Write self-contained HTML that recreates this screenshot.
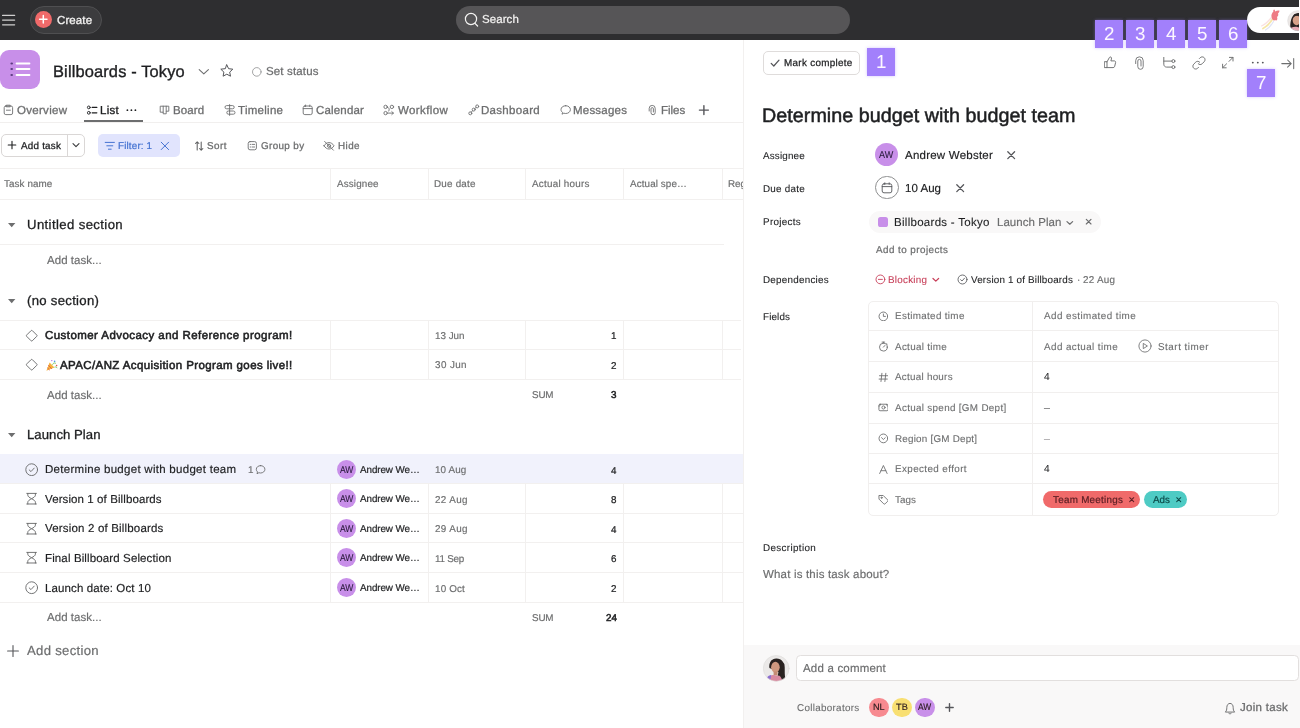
<!DOCTYPE html>
<html lang="en"><head><meta charset="utf-8"><title>Billboards - Tokyo</title>
<style>
html,body{margin:0;padding:0;background:#fff}
body{width:1300px;height:728px;overflow:hidden;position:relative;font-family:"Liberation Sans",sans-serif;-webkit-font-smoothing:antialiased}
#app{will-change:transform;position:absolute;left:0;top:0;width:1300px;height:728px;overflow:hidden;background:#fff}
.b{position:absolute;display:block}
.t{position:absolute;white-space:nowrap;line-height:1;display:block;transform:matrix(1,0,0.001,1,0,0)}
</style></head><body><div id="app">
<div class="b" style="left:0px;top:0px;width:1300px;height:39.75px;background:#2e2e30;"></div>
<svg class="b" style="left:1px;top:12px;" width="16" height="16" viewBox="0 0 16 16" fill="none" stroke="#d0cfce" stroke-width="1.3" stroke-linecap="round" stroke-linejoin="round"><path d="M1.6 3.4H13.6M1.6 8.1H13.6M1.6 12.8H13.6"/></svg>
<div class="b" style="left:30px;top:6px;width:72px;height:27.5px;background:#3c3c3e;border-radius:14px;border:1px solid #4f4f51;box-sizing:border-box;"></div>
<div class="b" style="left:35.2px;top:11.2px;width:16.6px;height:16.6px;background:#f06a6a;border-radius:9px;"></div>
<svg class="b" style="left:35.2px;top:11.2px;" width="16.6" height="16.6" viewBox="0 0 16.6 16.6" fill="none" stroke="#fff" stroke-width="1.5" stroke-linecap="round" stroke-linejoin="round"><path d="M8.3 4.6V12M4.6 8.3H12"/></svg>
<span class="t " style="left:56.9px;top:14.65px;font-size:11.52px;color:#f5f4f3;letter-spacing:0.1px;-webkit-text-stroke:0.3px #f5f4f3;">Create</span>
<div class="b" style="left:455.5px;top:6px;width:394.5px;height:27.5px;background:#565557;border-radius:14px;"></div>
<svg class="b" style="left:463px;top:11px;" width="18" height="18" viewBox="0 0 18 18" fill="none" stroke="#f5f4f3" stroke-width="1.2" stroke-linecap="round" stroke-linejoin="round"><circle cx="8" cy="8" r="5.6"/><path d="M12 12.3L14.6 15"/></svg>
<span class="t " style="left:482.3px;top:14.05px;font-size:11.52px;color:#f5f4f3;letter-spacing:0.06px;-webkit-text-stroke:0.2px #f5f4f3;">Search</span>
<div class="b" style="left:1246.7px;top:6.6px;width:70px;height:26.2px;background:#fff;border-radius:13.1px;"></div>
<svg class="b" style="left:1258px;top:8px;" width="26" height="24" viewBox="0 0 26 24" fill="none" stroke="none" stroke-width="1" stroke-linecap="round" stroke-linejoin="round"><path d="M5 20.5C9 18.5 12 15 14.5 11" stroke="#f6e6a8" stroke-width="1.8"/>
<path d="M7.5 22C11 20 13.5 17 15.5 13.5" stroke="#dfe4f6" stroke-width="1.2"/>
<path d="M3.5 18C7.5 16.5 10 13.5 13 10" stroke="#fae0e0" stroke-width="1.2"/>
<path d="M13.6 9.6C13 7.4 13.8 5 15.4 3.6C15 2.6 15.4 1.6 16.2 1.6C16.8 1.8 17 2.6 17.2 3.4C18.4 2.6 20 2.2 21.4 2.6C21.6 3.6 21 4.8 20 5.6C20.6 6.8 20.2 8.4 19 9C19.6 10.4 19.4 11.8 18.4 12.6C17.4 11.8 16.6 12.8 15.6 12.4C14.6 12 14 10.8 13.6 9.6Z" fill="#ee7b84" stroke="none"/></svg>
<svg class="b" style="left:1286.6px;top:9.6px;" width="22" height="22" viewBox="0 0 22 22" fill="none" stroke="none" stroke-width="1" stroke-linecap="round" stroke-linejoin="round"><defs><clipPath id="c1"><circle cx="10.7" cy="10.7" r="10"/></clipPath></defs>
<g clip-path="url(#c1)" stroke="none"><rect width="22" height="22" fill="#ece8e6"/>
<path d="M3.5 22C2.5 13 4 3.5 11 3C18 2.8 19.5 9 19 15C18.8 18 19 20 19.5 22Z" fill="#2b2422"/>
<ellipse cx="9.6" cy="10.4" rx="3.9" ry="4.8" fill="#d7a189"/>
<path d="M5.8 8.4C7 5.4 11 4.6 14 7.4C14.6 10 15 13 14 18L17 20L18 8L12.5 3.5L7 4.6Z" fill="#2b2422"/>
<path d="M1 22C2 18.5 5 16.6 9.4 16.8C12 17 14 18.5 15 22Z" fill="#e7a9b4"/></g>
<circle cx="10.7" cy="10.7" r="10" stroke="#dcd9d8" stroke-width="0.6" fill="none"/></svg>
<div class="b" style="left:-0.5px;top:49.8px;width:40px;height:39.6px;background:#c88fe9;border-radius:9px;"></div>
<svg class="b" style="left:7.5px;top:58px;" width="24" height="22" viewBox="0 0 24 22" fill="none" stroke="none" stroke-width="1" stroke-linecap="round" stroke-linejoin="round"><path d="M8.6 5.4H21.4M8.6 11.1H21.4M8.6 16.9H21.4" stroke="#fff" stroke-width="2"/><ellipse cx="3.7" cy="5.4" rx="1.3" ry="1" fill="#5b3c80" stroke="none"/><ellipse cx="3.7" cy="11.1" rx="1.3" ry="1" fill="#5b3c80" stroke="none"/><ellipse cx="3.7" cy="16.9" rx="1.3" ry="1" fill="#5b3c80" stroke="none"/></svg>
<span class="t " style="left:53.2px;top:63.47px;font-size:16.46px;color:#1e1f21;letter-spacing:0.13px;-webkit-text-stroke:0.35px #1e1f21;">Billboards - Tokyo</span>
<svg class="b" style="left:197px;top:66px;" width="14" height="12" viewBox="0 0 14 12" fill="none" stroke="#6d6e6f" stroke-width="1.1" stroke-linecap="round" stroke-linejoin="round"><path d="M2.2 3.6L6.8 7.8L11.4 3.6"/></svg>
<svg class="b" style="left:219px;top:63px;" width="16" height="16" viewBox="0 0 16 16" fill="none" stroke="#55565a" stroke-width="1" stroke-linecap="round" stroke-linejoin="round"><path d="M7.8 1.9L9.6 5.7L13.8 6.2L10.7 9.1L11.5 13.2L7.8 11.2L4.1 13.2L4.9 9.1L1.8 6.2L6 5.7Z"/></svg>
<svg class="b" style="left:251px;top:65.5px;" width="12" height="12" viewBox="0 0 12 12" fill="none" stroke="#8d8e8f" stroke-width="0.8" stroke-linecap="round" stroke-linejoin="round"><circle cx="5.8" cy="5.9" r="4.3"/></svg>
<span class="t " style="left:266.2px;top:65.65px;font-size:11.52px;color:#6d6e6f;letter-spacing:0.14px;-webkit-text-stroke:0.25px #6d6e6f;">Set status</span>
<svg class="b" style="left:3.2px;top:104px;" width="12" height="12" viewBox="0 0 12 12" fill="none" stroke="#6d6e6f" stroke-width="0.9" stroke-linecap="round" stroke-linejoin="round"><rect x="1.2" y="2" width="8.4" height="8.6" rx="1.6"/><path d="M3.6 1.2H7.2V2.8H3.6Z"/><path d="M3.4 6.2H7.4"/></svg>
<span class="t " style="left:16.6px;top:104.85px;font-size:11.52px;color:#6d6e6f;letter-spacing:0.29px;-webkit-text-stroke:0.3px #6d6e6f;">Overview</span>
<svg class="b" style="left:86px;top:104px;" width="12" height="12" viewBox="0 0 12 12" fill="none" stroke="#1e1f21" stroke-width="0.9" stroke-linecap="round" stroke-linejoin="round"><circle cx="2.8" cy="3.4" r="1.4"/><circle cx="2.8" cy="8.8" r="1.4"/><path d="M6.2 3.4H10.8M6.2 8.8H10.8" stroke-width="1.3"/></svg>
<span class="t " style="left:100.2px;top:104.85px;font-size:11.52px;color:#1e1f21;letter-spacing:0.26px;-webkit-text-stroke:0.35px #1e1f21;">List</span>
<svg class="b" style="left:125px;top:104px;" width="14" height="12" viewBox="0 0 14 12" fill="#1e1f21" stroke="none" stroke-width="1" stroke-linecap="round" stroke-linejoin="round"><circle cx="2.4" cy="6.2" r="0.9"/><circle cx="6.4" cy="6.2" r="0.9"/><circle cx="10.4" cy="6.2" r="0.9"/></svg>
<svg class="b" style="left:158.5px;top:104px;" width="12" height="12" viewBox="0 0 12 12" fill="none" stroke="#6d6e6f" stroke-width="0.9" stroke-linecap="round" stroke-linejoin="round"><path d="M1.6 2.2H9.8V7.2H7.2V9.8H4.2V8.2H1.6Z"/><path d="M4.2 2.2V8.2M7.2 2.2V7.2"/></svg>
<span class="t " style="left:172.7px;top:104.85px;font-size:11.52px;color:#6d6e6f;letter-spacing:0.12px;-webkit-text-stroke:0.3px #6d6e6f;">Board</span>
<svg class="b" style="left:223.6px;top:104px;" width="12" height="12" viewBox="0 0 12 12" fill="none" stroke="#6d6e6f" stroke-width="0.9" stroke-linecap="round" stroke-linejoin="round"><path d="M5.6 1.6H2.6A1.5 1.5 0 0 0 2.6 4.8H8.6A1.5 1.5 0 0 0 8.6 1.6H5.6M5.6 7H4.4A1.5 1.5 0 0 0 4.4 10.2H9.4A1.5 1.5 0 0 0 9.4 7H5.6M5.6 0.6V11.4"/></svg>
<span class="t " style="left:237.7px;top:104.85px;font-size:11.52px;color:#6d6e6f;letter-spacing:0.27px;-webkit-text-stroke:0.3px #6d6e6f;">Timeline</span>
<svg class="b" style="left:302.2px;top:104px;" width="12" height="12" viewBox="0 0 12 12" fill="none" stroke="#6d6e6f" stroke-width="0.9" stroke-linecap="round" stroke-linejoin="round"><rect x="1.2" y="2" width="9" height="8.6" rx="1.6"/><path d="M1.2 4.6H10.2M3.6 1V2.6M7.8 1V2.6"/></svg>
<span class="t " style="left:316.3px;top:104.85px;font-size:11.52px;color:#6d6e6f;letter-spacing:0.17px;-webkit-text-stroke:0.3px #6d6e6f;">Calendar</span>
<svg class="b" style="left:383.4px;top:104px;" width="12" height="12" viewBox="0 0 12 12" fill="none" stroke="#6d6e6f" stroke-width="0.9" stroke-linecap="round" stroke-linejoin="round"><circle cx="2.6" cy="2.9" r="1.7"/><circle cx="8.9" cy="2.9" r="1.7"/><circle cx="2.6" cy="9.1" r="1.7"/><path d="M4.3 3.2C6.2 3.6 6.8 5.4 5.8 7M5.2 9.1H10.4M8.8 7.6L10.4 9.1L8.8 10.6"/></svg>
<span class="t " style="left:397.9px;top:104.85px;font-size:11.52px;color:#6d6e6f;letter-spacing:0.38px;-webkit-text-stroke:0.3px #6d6e6f;">Workflow</span>
<svg class="b" style="left:467.6px;top:104px;" width="12" height="12" viewBox="0 0 12 12" fill="none" stroke="#6d6e6f" stroke-width="0.9" stroke-linecap="round" stroke-linejoin="round"><circle cx="2.3" cy="9.3" r="1.5"/><circle cx="5.7" cy="5.6" r="1.5"/><circle cx="9.2" cy="2.4" r="1.5"/><path d="M3.2 8.2L4.6 6.7M6.8 4.6L8 3.5"/></svg>
<span class="t " style="left:481.3px;top:104.85px;font-size:11.52px;color:#6d6e6f;letter-spacing:0.29px;-webkit-text-stroke:0.3px #6d6e6f;">Dashboard</span>
<svg class="b" style="left:559.6px;top:104px;" width="12" height="12" viewBox="0 0 12 12" fill="none" stroke="#6d6e6f" stroke-width="0.9" stroke-linecap="round" stroke-linejoin="round"><path d="M5.7 1.7C8.4 1.7 10.4 3.4 10.4 5.6C10.4 7.8 8.4 9.5 5.7 9.5C5 9.5 4.4 9.4 3.8 9.2L2 10.2L2.6 8.5C1.6 7.8 1 6.8 1 5.6C1 3.4 3 1.7 5.7 1.7Z"/></svg>
<span class="t " style="left:573.4px;top:104.85px;font-size:11.52px;color:#6d6e6f;letter-spacing:0.2px;-webkit-text-stroke:0.3px #6d6e6f;">Messages</span>
<svg class="b" style="left:648.2px;top:104px;" width="12" height="12" viewBox="0 0 12 12" fill="none" stroke="#6d6e6f" stroke-width="0.9" stroke-linecap="round" stroke-linejoin="round"><path d="M1.2 7V4.4A3 3 0 0 1 7.2 4.4V8.6A2.1 2.1 0 0 1 3 8.6V4.8A1.2 1.2 0 0 1 5.4 4.8V8"/></svg>
<span class="t " style="left:660.8px;top:104.85px;font-size:11.52px;color:#6d6e6f;letter-spacing:-0.01px;-webkit-text-stroke:0.3px #6d6e6f;">Files</span>
<svg class="b" style="left:697px;top:104px;" width="14" height="12" viewBox="0 0 14 12" fill="none" stroke="#55565a" stroke-width="1.4" stroke-linecap="round" stroke-linejoin="round"><path d="M6.9 1.6V10.6M2.4 6.1H11.4"/></svg>
<div class="b" style="left:84.2px;top:120px;width:58.6px;height:1.6px;background:#6d6e6f;"></div>
<div class="b" style="left:0px;top:122.2px;width:744px;height:1px;background:#f1efee;"></div>
<div class="b" style="left:0.8px;top:134.3px;width:83.8px;height:22.4px;background:#fff;border-radius:5px;border:1px solid #dad7d6;box-sizing:border-box;"></div>
<div class="b" style="left:67.2px;top:135px;width:1px;height:21px;background:#dad7d6;"></div>
<svg class="b" style="left:6px;top:139px;" width="12" height="12" viewBox="0 0 12 12" fill="none" stroke="#1e1f21" stroke-width="1.1" stroke-linecap="round" stroke-linejoin="round"><path d="M6 2.2V9.8M2.2 6H9.8"/></svg>
<span class="t " style="left:20.8px;top:140.75px;font-size:9.87px;color:#1e1f21;letter-spacing:0.21px;-webkit-text-stroke:0.28px #1e1f21;">Add task</span>
<svg class="b" style="left:71px;top:140px;" width="10" height="10" viewBox="0 0 10 10" fill="none" stroke="#3a3b3d" stroke-width="1.1" stroke-linecap="round" stroke-linejoin="round"><path d="M2 3.6L5 6.6L8 3.6"/></svg>
<div class="b" style="left:98.2px;top:134.1px;width:81.8px;height:22.6px;background:#e1e4fd;border-radius:5px;"></div>
<svg class="b" style="left:104px;top:139.5px;" width="12" height="12" viewBox="0 0 12 12" fill="none" stroke="#4573d2" stroke-width="1" stroke-linecap="round" stroke-linejoin="round"><path d="M1.2 2.4H10.4M2.8 5.8H8.8M4.4 9.2H7.2"/></svg>
<span class="t " style="left:118.3px;top:140.75px;font-size:9.87px;color:#4573d2;letter-spacing:0.15px;-webkit-text-stroke:0.22px #4573d2;">Filter: 1</span>
<svg class="b" style="left:159px;top:139.5px;" width="12" height="12" viewBox="0 0 12 12" fill="none" stroke="#4573d2" stroke-width="1" stroke-linecap="round" stroke-linejoin="round"><path d="M2.2 2.2L9.6 9.6M9.6 2.2L2.2 9.6"/></svg>
<svg class="b" style="left:193.5px;top:139.5px;" width="12" height="12" viewBox="0 0 12 12" fill="none" stroke="#5f6061" stroke-width="1.05" stroke-linecap="round" stroke-linejoin="round"><path d="M3.2 10V1.8M1.5 3.5L3.2 1.8L4.9 3.5M7.2 2V10.2M5.5 8.5L7.2 10.2L8.9 8.5"/></svg>
<span class="t " style="left:206.9px;top:140.75px;font-size:9.87px;color:#6d6e6f;letter-spacing:0.43px;-webkit-text-stroke:0.28px #6d6e6f;">Sort</span>
<svg class="b" style="left:247.4px;top:139.5px;" width="12" height="12" viewBox="0 0 12 12" fill="none" stroke="#6d6e6f" stroke-width="0.9" stroke-linecap="round" stroke-linejoin="round"><rect x="1.2" y="1.6" width="8.2" height="8.2" rx="1.8"/><path d="M3.2 4.4H3.6M5 4.4H7.6M3.2 7H3.6M5 7H7.6"/></svg>
<span class="t " style="left:260.5px;top:140.75px;font-size:9.87px;color:#6d6e6f;letter-spacing:0.36px;-webkit-text-stroke:0.28px #6d6e6f;">Group by</span>
<svg class="b" style="left:323.4px;top:139.5px;" width="12" height="12" viewBox="0 0 12 12" fill="none" stroke="#6d6e6f" stroke-width="0.9" stroke-linecap="round" stroke-linejoin="round"><path d="M1 5.8C2.4 3.6 4 2.6 6 2.6C8 2.6 9.6 3.6 11 5.8C9.6 8 8 9 6 9C4 9 2.4 8 1 5.8Z"/><circle cx="6" cy="5.8" r="1.6"/><path d="M1.6 1.4L10.4 10.2"/></svg>
<span class="t " style="left:337.8px;top:140.75px;font-size:9.87px;color:#6d6e6f;letter-spacing:0.43px;-webkit-text-stroke:0.28px #6d6e6f;">Hide</span>
<div class="b" style="left:0px;top:168px;width:744px;height:1px;background:#f2f0ef;"></div>
<div class="b" style="left:0px;top:199px;width:744px;height:1px;background:#f2f0ef;"></div>
<div class="b" style="left:330px;top:168px;width:1px;height:32px;background:#f2f0ef;"></div>
<div class="b" style="left:428px;top:168px;width:1px;height:32px;background:#f2f0ef;"></div>
<div class="b" style="left:525px;top:168px;width:1px;height:32px;background:#f2f0ef;"></div>
<div class="b" style="left:623px;top:168px;width:1px;height:32px;background:#f2f0ef;"></div>
<div class="b" style="left:722px;top:168px;width:1px;height:32px;background:#f2f0ef;"></div>
<span class="t " style="left:3.8px;top:178.75px;font-size:9.87px;color:#6d6e6f;letter-spacing:0.08px;-webkit-text-stroke:0.17px #6d6e6f;">Task name</span>
<span class="t " style="left:336.8px;top:178.75px;font-size:9.87px;color:#6d6e6f;letter-spacing:0.13px;-webkit-text-stroke:0.17px #6d6e6f;">Assignee</span>
<span class="t " style="left:434.4px;top:178.75px;font-size:9.87px;color:#6d6e6f;letter-spacing:0.2px;-webkit-text-stroke:0.17px #6d6e6f;">Due date</span>
<span class="t " style="left:532.4px;top:178.75px;font-size:9.87px;color:#6d6e6f;letter-spacing:0.24px;-webkit-text-stroke:0.17px #6d6e6f;">Actual hours</span>
<span class="t " style="left:630.1px;top:178.95px;font-size:9.87px;color:#6d6e6f;letter-spacing:0.1px;-webkit-text-stroke:0.17px #6d6e6f;">Actual spe…</span>
<span class="t " style="left:727.7px;top:178.75px;font-size:9.87px;color:#6d6e6f;-webkit-text-stroke:0.17px #6d6e6f;">Region</span>
<svg class="b" style="left:7px;top:221.3px;" width="10" height="8" viewBox="0 0 10 8" fill="#6d6e6f" stroke="none" stroke-width="1" stroke-linecap="round" stroke-linejoin="round"><path d="M1 2H8.4L4.7 6.2Z"/></svg>
<span class="t " style="left:26.6px;top:218.36px;font-size:13.16px;color:#1e1f21;letter-spacing:0.38px;-webkit-text-stroke:0.3px #1e1f21;">Untitled section</span>
<div class="b" style="left:0px;top:244px;width:724px;height:1px;background:#f2f0ef;"></div>
<span class="t " style="left:46.7px;top:255.15px;font-size:11.52px;color:#6d6e6f;letter-spacing:0.02px;-webkit-text-stroke:0.17px #6d6e6f;">Add task...</span>
<svg class="b" style="left:7px;top:296.7px;" width="10" height="8" viewBox="0 0 10 8" fill="#6d6e6f" stroke="none" stroke-width="1" stroke-linecap="round" stroke-linejoin="round"><path d="M1 2H8.4L4.7 6.2Z"/></svg>
<span class="t " style="left:26.6px;top:293.76px;font-size:13.16px;color:#1e1f21;letter-spacing:0.29px;-webkit-text-stroke:0.3px #1e1f21;">(no section)</span>
<div class="b" style="left:0px;top:320px;width:741px;height:1px;background:#f2f0ef;"></div>
<div class="b" style="left:0px;top:349px;width:741px;height:1px;background:#f2f0ef;"></div>
<div class="b" style="left:0px;top:379px;width:741px;height:1px;background:#f2f0ef;"></div>
<div class="b" style="left:330px;top:321px;width:1px;height:58px;background:#f2f0ef;"></div>
<div class="b" style="left:428px;top:321px;width:1px;height:58px;background:#f2f0ef;"></div>
<div class="b" style="left:525px;top:321px;width:1px;height:58px;background:#f2f0ef;"></div>
<div class="b" style="left:623px;top:321px;width:1px;height:58px;background:#f2f0ef;"></div>
<div class="b" style="left:722px;top:321px;width:1px;height:58px;background:#f2f0ef;"></div>
<svg class="b" style="left:24.9px;top:328.8px;" width="13.4" height="13.4" viewBox="0 0 13.4 13.4" fill="none" stroke="#6d6e6f" stroke-width="0.95" stroke-linecap="round" stroke-linejoin="round"><path d="M6.1 1.6Q6.7 1 7.3 1.6L11.8 6.1Q12.4 6.7 11.8 7.3L7.3 11.8Q6.7 12.4 6.1 11.8L1.6 7.3Q1 6.7 1.6 6.1Z"/></svg>
<span class="t " style="left:45.1px;top:329.95px;font-size:11.52px;color:#1e1f21;letter-spacing:0.43px;-webkit-text-stroke:0.55px #1e1f21;">Customer Advocacy and Reference program!</span>
<span class="t " style="left:434.5px;top:330.95px;font-size:9.87px;color:#6d6e6f;letter-spacing:-0.01px;-webkit-text-stroke:0.17px #6d6e6f;">13 Jun</span>
<span class="t " style="left:610.62px;top:331.35px;font-size:9.87px;color:#1e1f21;-webkit-text-stroke:0.23px #1e1f21;">1</span>
<svg class="b" style="left:24.9px;top:358.4px;" width="13.4" height="13.4" viewBox="0 0 13.4 13.4" fill="none" stroke="#6d6e6f" stroke-width="0.95" stroke-linecap="round" stroke-linejoin="round"><path d="M6.1 1.6Q6.7 1 7.3 1.6L11.8 6.1Q12.4 6.7 11.8 7.3L7.3 11.8Q6.7 12.4 6.1 11.8L1.6 7.3Q1 6.7 1.6 6.1Z"/></svg>
<span class="t" style="left:44.5px;top:359px;font-size:11.5px;opacity:0">🎉</span>
<svg class="b" style="left:44.6px;top:358.6px;" width="13" height="13" viewBox="0 0 13 13" fill="none" stroke="none" stroke-width="1" stroke-linecap="round" stroke-linejoin="round"><path d="M1.4 11.8L4.6 3.6L9.4 8.6Z" fill="#f4b43c" stroke="none"/><path d="M2.6 9L4.4 10.8M3.6 6.4L6.6 9.6" stroke="#e0564a" stroke-width="0.9"/>
<circle cx="9.6" cy="2.4" r="0.8" fill="#4f9de8" stroke="none"/><circle cx="11.6" cy="6.6" r="0.8" fill="#e0564a" stroke="none"/><circle cx="6.8" cy="1.6" r="0.7" fill="#b36fe0" stroke="none"/>
<path d="M7.6 5.4C8 4 9.4 3.6 10.6 4.2M9.8 8C10.6 7.6 11.6 8 12 8.8" stroke="#6cc04a" stroke-width="0.8" fill="none"/></svg>
<span class="t " style="left:60px;top:359.85px;font-size:11.52px;color:#1e1f21;letter-spacing:0.38px;-webkit-text-stroke:0.55px #1e1f21;">APAC/ANZ Acquisition Program goes live!!</span>
<span class="t " style="left:434.5px;top:360.45px;font-size:9.87px;color:#6d6e6f;letter-spacing:0.39px;-webkit-text-stroke:0.17px #6d6e6f;">30 Jun</span>
<span class="t " style="left:610.62px;top:360.95px;font-size:9.87px;color:#1e1f21;-webkit-text-stroke:0.23px #1e1f21;">2</span>
<span class="t " style="left:46.7px;top:389.95px;font-size:11.52px;color:#6d6e6f;letter-spacing:0.02px;-webkit-text-stroke:0.17px #6d6e6f;">Add task...</span>
<span class="t " style="left:531.5px;top:389.65px;font-size:9.87px;color:#6d6e6f;letter-spacing:-0.17px;-webkit-text-stroke:0.17px #6d6e6f;">SUM</span>
<span class="t " style="left:611.02px;top:390.05px;font-size:9.87px;color:#1e1f21;-webkit-text-stroke:0.53px #1e1f21;">3</span>
<svg class="b" style="left:7px;top:430.7px;" width="10" height="8" viewBox="0 0 10 8" fill="#6d6e6f" stroke="none" stroke-width="1" stroke-linecap="round" stroke-linejoin="round"><path d="M1 2H8.4L4.7 6.2Z"/></svg>
<span class="t " style="left:26.6px;top:427.76px;font-size:13.16px;color:#1e1f21;letter-spacing:0.03px;-webkit-text-stroke:0.3px #1e1f21;">Launch Plan</span>
<div class="b" style="left:0px;top:454.2px;width:744px;height:29.6px;background:#f1f2fc;"></div>
<div class="b" style="left:0px;top:483px;width:744px;height:1px;background:#f2f0ef;"></div>
<div class="b" style="left:0px;top:513px;width:744px;height:1px;background:#f2f0ef;"></div>
<div class="b" style="left:0px;top:542px;width:744px;height:1px;background:#f2f0ef;"></div>
<div class="b" style="left:0px;top:572px;width:744px;height:1px;background:#f2f0ef;"></div>
<div class="b" style="left:0px;top:602px;width:744px;height:1px;background:#f2f0ef;"></div>
<div class="b" style="left:330px;top:484px;width:1px;height:118px;background:#f2f0ef;"></div>
<div class="b" style="left:428px;top:484px;width:1px;height:118px;background:#f2f0ef;"></div>
<div class="b" style="left:525px;top:484px;width:1px;height:118px;background:#f2f0ef;"></div>
<div class="b" style="left:623px;top:484px;width:1px;height:118px;background:#f2f0ef;"></div>
<div class="b" style="left:722px;top:484px;width:1px;height:118px;background:#f2f0ef;"></div>
<svg class="b" style="left:24.9px;top:462.8px;" width="13.4" height="13.4" viewBox="0 0 13.4 13.4" fill="none" stroke="#6d6e6f" stroke-width="0.95" stroke-linecap="round" stroke-linejoin="round"><circle cx="6.7" cy="6.7" r="5.9"/><path d="M4.2 6.9L6 8.6L9.2 5.1"/></svg>
<span class="t " style="left:45.1px;top:464.15px;font-size:11.52px;color:#1e1f21;letter-spacing:0.27px;-webkit-text-stroke:0.17px #1e1f21;">Determine budget with budget team</span>
<div class="b" style="left:337px;top:459.6px;width:19.2px;height:19.2px;background:#c88fe9;border-radius:10px;"></div>
<span class="t " style="left:340px;top:464.89px;font-size:9.7px;color:#2a1b3d;-webkit-text-stroke:0.1px #2a1b3d;transform:matrix(0.88,0,0.001,1,0,0);transform-origin:0px 50%;">AW</span>
<span class="t " style="left:360px;top:464.75px;font-size:9.87px;color:#1e1f21;letter-spacing:-0.09px;-webkit-text-stroke:0.2px #1e1f21;">Andrew We…</span>
<span class="t " style="left:434.5px;top:465.15px;font-size:9.87px;color:#6d6e6f;letter-spacing:0.13px;-webkit-text-stroke:0.17px #6d6e6f;">10 Aug</span>
<span class="t " style="left:610.62px;top:465.65px;font-size:9.87px;color:#1e1f21;-webkit-text-stroke:0.23px #1e1f21;">4</span>
<svg class="b" style="left:24.9px;top:492.35px;" width="13.4" height="13.4" viewBox="0 0 13.4 13.4" fill="none" stroke="#6d6e6f" stroke-width="0.95" stroke-linecap="round" stroke-linejoin="round"><path d="M1.8 1.4H11.4M1.8 12H11.4M2.8 1.4V3.2C2.8 4.6 4.6 5.6 6.6 6.7C8.6 5.6 10.4 4.6 10.4 3.2V1.4M2.8 12V10.2C2.8 8.8 4.6 7.8 6.6 6.7C8.6 7.8 10.4 8.8 10.4 10.2V12"/></svg>
<span class="t " style="left:45.1px;top:493.7px;font-size:11.52px;color:#1e1f21;letter-spacing:0.09px;-webkit-text-stroke:0.17px #1e1f21;">Version 1 of Billboards</span>
<div class="b" style="left:337px;top:489.15px;width:19.2px;height:19.2px;background:#c88fe9;border-radius:10px;"></div>
<span class="t " style="left:340px;top:494.44px;font-size:9.7px;color:#2a1b3d;-webkit-text-stroke:0.1px #2a1b3d;transform:matrix(0.88,0,0.001,1,0,0);transform-origin:0px 50%;">AW</span>
<span class="t " style="left:360px;top:494.3px;font-size:9.87px;color:#1e1f21;letter-spacing:-0.09px;-webkit-text-stroke:0.2px #1e1f21;">Andrew We…</span>
<span class="t " style="left:434.5px;top:494.7px;font-size:9.87px;color:#6d6e6f;letter-spacing:0.37px;-webkit-text-stroke:0.17px #6d6e6f;">22 Aug</span>
<span class="t " style="left:610.62px;top:495.2px;font-size:9.87px;color:#1e1f21;-webkit-text-stroke:0.23px #1e1f21;">8</span>
<svg class="b" style="left:24.9px;top:521.75px;" width="13.4" height="13.4" viewBox="0 0 13.4 13.4" fill="none" stroke="#6d6e6f" stroke-width="0.95" stroke-linecap="round" stroke-linejoin="round"><path d="M1.8 1.4H11.4M1.8 12H11.4M2.8 1.4V3.2C2.8 4.6 4.6 5.6 6.6 6.7C8.6 5.6 10.4 4.6 10.4 3.2V1.4M2.8 12V10.2C2.8 8.8 4.6 7.8 6.6 6.7C8.6 7.8 10.4 8.8 10.4 10.2V12"/></svg>
<span class="t " style="left:45.1px;top:523.1px;font-size:11.52px;color:#1e1f21;letter-spacing:0.17px;-webkit-text-stroke:0.17px #1e1f21;">Version 2 of Billboards</span>
<div class="b" style="left:337px;top:518.55px;width:19.2px;height:19.2px;background:#c88fe9;border-radius:10px;"></div>
<span class="t " style="left:340px;top:523.84px;font-size:9.7px;color:#2a1b3d;-webkit-text-stroke:0.1px #2a1b3d;transform:matrix(0.88,0,0.001,1,0,0);transform-origin:0px 50%;">AW</span>
<span class="t " style="left:360px;top:523.7px;font-size:9.87px;color:#1e1f21;letter-spacing:-0.09px;-webkit-text-stroke:0.2px #1e1f21;">Andrew We…</span>
<span class="t " style="left:434.5px;top:524.1px;font-size:9.87px;color:#6d6e6f;letter-spacing:0.37px;-webkit-text-stroke:0.17px #6d6e6f;">29 Aug</span>
<span class="t " style="left:610.62px;top:524.6px;font-size:9.87px;color:#1e1f21;-webkit-text-stroke:0.23px #1e1f21;">4</span>
<svg class="b" style="left:24.9px;top:551.35px;" width="13.4" height="13.4" viewBox="0 0 13.4 13.4" fill="none" stroke="#6d6e6f" stroke-width="0.95" stroke-linecap="round" stroke-linejoin="round"><path d="M1.8 1.4H11.4M1.8 12H11.4M2.8 1.4V3.2C2.8 4.6 4.6 5.6 6.6 6.7C8.6 5.6 10.4 4.6 10.4 3.2V1.4M2.8 12V10.2C2.8 8.8 4.6 7.8 6.6 6.7C8.6 7.8 10.4 8.8 10.4 10.2V12"/></svg>
<span class="t " style="left:45.1px;top:552.7px;font-size:11.52px;color:#1e1f21;letter-spacing:0.12px;-webkit-text-stroke:0.17px #1e1f21;">Final Billboard Selection</span>
<div class="b" style="left:337px;top:548.15px;width:19.2px;height:19.2px;background:#c88fe9;border-radius:10px;"></div>
<span class="t " style="left:340px;top:553.44px;font-size:9.7px;color:#2a1b3d;-webkit-text-stroke:0.1px #2a1b3d;transform:matrix(0.88,0,0.001,1,0,0);transform-origin:0px 50%;">AW</span>
<span class="t " style="left:360px;top:553.3px;font-size:9.87px;color:#1e1f21;letter-spacing:-0.09px;-webkit-text-stroke:0.2px #1e1f21;">Andrew We…</span>
<span class="t " style="left:434.5px;top:553.7px;font-size:9.87px;color:#6d6e6f;letter-spacing:-0.27px;-webkit-text-stroke:0.17px #6d6e6f;">11 Sep</span>
<span class="t " style="left:610.62px;top:554.2px;font-size:9.87px;color:#1e1f21;-webkit-text-stroke:0.23px #1e1f21;">6</span>
<svg class="b" style="left:24.9px;top:581.25px;" width="13.4" height="13.4" viewBox="0 0 13.4 13.4" fill="none" stroke="#6d6e6f" stroke-width="0.95" stroke-linecap="round" stroke-linejoin="round"><circle cx="6.7" cy="6.7" r="5.9"/><path d="M4.2 6.9L6 8.6L9.2 5.1"/></svg>
<span class="t " style="left:45.1px;top:582.6px;font-size:11.52px;color:#1e1f21;letter-spacing:0.12px;-webkit-text-stroke:0.17px #1e1f21;">Launch date: Oct 10</span>
<div class="b" style="left:337px;top:578.05px;width:19.2px;height:19.2px;background:#c88fe9;border-radius:10px;"></div>
<span class="t " style="left:340px;top:583.34px;font-size:9.7px;color:#2a1b3d;-webkit-text-stroke:0.1px #2a1b3d;transform:matrix(0.88,0,0.001,1,0,0);transform-origin:0px 50%;">AW</span>
<span class="t " style="left:360px;top:583.2px;font-size:9.87px;color:#1e1f21;letter-spacing:-0.09px;-webkit-text-stroke:0.2px #1e1f21;">Andrew We…</span>
<span class="t " style="left:434.5px;top:583.6px;font-size:9.87px;color:#6d6e6f;letter-spacing:0.15px;-webkit-text-stroke:0.17px #6d6e6f;">10 Oct</span>
<span class="t " style="left:610.62px;top:584.1px;font-size:9.87px;color:#1e1f21;-webkit-text-stroke:0.23px #1e1f21;">2</span>
<span class="t " style="left:247.9px;top:465.05px;font-size:9.87px;color:#6d6e6f;-webkit-text-stroke:0.17px #6d6e6f;">1</span>
<svg class="b" style="left:255.4px;top:463.8px;" width="12" height="12" viewBox="0 0 12 12" fill="none" stroke="#6d6e6f" stroke-width="0.9" stroke-linecap="round" stroke-linejoin="round"><path d="M5.6 1.6C8 1.6 9.9 3.2 9.9 5.3C9.9 7.4 8 9 5.6 9C5 9 4.4 8.9 3.9 8.7L2 9.8L2.5 7.9C1.7 7.2 1.3 6.3 1.3 5.3C1.3 3.2 3.2 1.6 5.6 1.6Z"/></svg>
<span class="t " style="left:46.7px;top:612.35px;font-size:11.52px;color:#6d6e6f;letter-spacing:0.02px;-webkit-text-stroke:0.17px #6d6e6f;">Add task...</span>
<span class="t " style="left:531.5px;top:612.75px;font-size:9.87px;color:#6d6e6f;letter-spacing:-0.17px;-webkit-text-stroke:0.17px #6d6e6f;">SUM</span>
<span class="t " style="left:605.52px;top:613.05px;font-size:9.87px;color:#1e1f21;-webkit-text-stroke:0.53px #1e1f21;">24</span>
<svg class="b" style="left:6px;top:643.5px;" width="14" height="14" viewBox="0 0 14 14" fill="none" stroke="#55565a" stroke-width="1.1" stroke-linecap="round" stroke-linejoin="round"><path d="M7 1.6V12.4M1.6 7H12.4"/></svg>
<span class="t " style="left:26.7px;top:644.26px;font-size:13.16px;color:#6d6e6f;letter-spacing:0.28px;-webkit-text-stroke:0.2px #6d6e6f;">Add section</span>
<div class="b" style="left:744px;top:40px;width:556px;height:688px;background:#fff;"></div>
<div class="b" style="left:743px;top:40px;width:1px;height:688px;background:#f2f0ef;"></div>
<div class="b" style="left:763px;top:51.2px;width:96.6px;height:23.4px;background:#fff;border-radius:5px;border:1px solid #dfdcdb;box-sizing:border-box;"></div>
<svg class="b" style="left:769px;top:57px;" width="12" height="12" viewBox="0 0 12 12" fill="none" stroke="#55565a" stroke-width="1.25" stroke-linecap="round" stroke-linejoin="round"><path d="M2.2 6.4L4.8 9L10 3.2"/></svg>
<span class="t " style="left:783.7px;top:58.45px;font-size:9.87px;color:#1e1f21;letter-spacing:0.3px;-webkit-text-stroke:0.25px #1e1f21;">Mark complete</span>
<div class="b" style="left:867px;top:48px;width:28px;height:28px;background:#a280fb;box-shadow:0 0 3px rgba(160,130,250,.45);"></div>
<span class="t " style="left:875.78px;top:52.89px;font-size:18.8px;color:#fdf7ff;">1</span>
<div class="b" style="left:1095px;top:20px;width:28px;height:28px;background:#a280fb;box-shadow:0 0 3px rgba(160,130,250,.45);"></div>
<span class="t " style="left:1103.78px;top:24.89px;font-size:18.8px;color:#fdf7ff;">2</span>
<div class="b" style="left:1126px;top:20px;width:28px;height:28px;background:#a280fb;box-shadow:0 0 3px rgba(160,130,250,.45);"></div>
<span class="t " style="left:1134.78px;top:24.89px;font-size:18.8px;color:#fdf7ff;">3</span>
<div class="b" style="left:1157px;top:20px;width:28px;height:28px;background:#a280fb;box-shadow:0 0 3px rgba(160,130,250,.45);"></div>
<span class="t " style="left:1165.78px;top:24.89px;font-size:18.8px;color:#fdf7ff;">4</span>
<div class="b" style="left:1188px;top:20px;width:28px;height:28px;background:#a280fb;box-shadow:0 0 3px rgba(160,130,250,.45);"></div>
<span class="t " style="left:1196.78px;top:24.89px;font-size:18.8px;color:#fdf7ff;">5</span>
<div class="b" style="left:1219px;top:20px;width:28px;height:28px;background:#a280fb;box-shadow:0 0 3px rgba(160,130,250,.45);"></div>
<span class="t " style="left:1227.78px;top:24.89px;font-size:18.8px;color:#fdf7ff;">6</span>
<div class="b" style="left:1247px;top:69px;width:28px;height:28px;background:#a280fb;box-shadow:0 0 3px rgba(160,130,250,.45);"></div>
<span class="t " style="left:1255.78px;top:73.89px;font-size:18.8px;color:#fdf7ff;">7</span>
<svg class="b" style="left:1104px;top:55.6px;" width="13" height="13" viewBox="0 0 13 13" fill="none" stroke="#6d6e6f" stroke-width="0.95" stroke-linecap="round" stroke-linejoin="round"><path d="M0.7 5.7H3V11.6H0.7ZM3 5.9L5.3 1.7C5.6 1 6.5 0.7 7.1 1.2C7.6 1.7 7.6 2.4 7.4 3.1L6.9 4.9H10.3C11.2 4.9 11.8 5.7 11.6 6.5L10.7 10.3C10.5 11.1 9.9 11.6 9.1 11.6H3"/></svg>
<svg class="b" style="left:1135px;top:56.2px;" width="10" height="15" viewBox="0 0 10 15" fill="none" stroke="#6d6e6f" stroke-width="0.9" stroke-linecap="round" stroke-linejoin="round"><path d="M0.7 7.6V4.6A3.75 3.75 0 0 1 8.2 4.6V10.6A2.7 2.7 0 0 1 2.8 10.6V5A1.6 1.6 0 0 1 6 5V10"/></svg>
<svg class="b" style="left:1162.6px;top:57px;" width="13" height="13" viewBox="0 0 13 13" fill="none" stroke="#6d6e6f" stroke-width="0.95" stroke-linecap="round" stroke-linejoin="round"><path d="M0.8 0.4V7.2C0.8 8.9 2 10.1 3.6 10.1H8.8M0.8 4.1H8.8"/><circle cx="10.4" cy="4.1" r="1.5"/><circle cx="10.4" cy="10.1" r="1.5"/></svg>
<svg class="b" style="left:1191px;top:55.2px;" width="16" height="16" viewBox="0 0 16 16" fill="none" stroke="#6d6e6f" stroke-width="0.95" stroke-linecap="round" stroke-linejoin="round"><path d="M7.2 8.7C8.3 9.9 10 9.9 11.1 8.8L13.2 6.7C14.3 5.6 14.3 3.8 13.2 2.7C12.1 1.6 10.3 1.6 9.2 2.7L8.4 3.5M8.7 7.2C7.6 6 5.9 6 4.8 7.1L2.7 9.2C1.6 10.3 1.6 12.1 2.7 13.2C3.8 14.3 5.6 14.3 6.7 13.2L7.5 12.4"/></svg>
<svg class="b" style="left:1220px;top:55.4px;" width="16" height="15" viewBox="0 0 16 15" fill="none" stroke="#6d6e6f" stroke-width="0.95" stroke-linecap="round" stroke-linejoin="round"><path d="M9.4 2.4H13V6M13 2.4L9 6.4M6.2 12.8H2.6V9.2M2.6 12.8L6.6 8.8"/></svg>
<svg class="b" style="left:1250px;top:58.2px;" width="16" height="10" viewBox="0 0 16 10" fill="#55565a" stroke="none" stroke-width="1" stroke-linecap="round" stroke-linejoin="round"><circle cx="2.8" cy="4.6" r="0.95"/><circle cx="7.8" cy="4.6" r="0.95"/><circle cx="12.8" cy="4.6" r="0.95"/></svg>
<svg class="b" style="left:1280px;top:55.6px;" width="16" height="15" viewBox="0 0 16 15" fill="none" stroke="#6d6e6f" stroke-width="1.05" stroke-linecap="round" stroke-linejoin="round"><path d="M1.8 7.6H11M7.6 4L11.2 7.6L7.6 11.2M13.7 2.6V12.6"/></svg>
<span class="t " style="left:762.3px;top:106.08px;font-size:19.75px;color:#1e1f21;letter-spacing:0.02px;-webkit-text-stroke:0.5px #1e1f21;">Determine budget with budget team</span>
<span class="t " style="left:763.1px;top:150.55px;font-size:9.87px;color:#1e1f21;letter-spacing:0.17px;-webkit-text-stroke:0.1px #1e1f21;">Assignee</span>
<div class="b" style="left:875.2px;top:143px;width:23.2px;height:23.2px;background:#c88fe9;border-radius:12px;"></div>
<span class="t " style="left:879.4px;top:149.84px;font-size:10px;color:#2a1b3d;-webkit-text-stroke:0.1px #2a1b3d;transform:matrix(0.9,0,0.001,1,0,0);transform-origin:0px 50%;">AW</span>
<span class="t " style="left:904.9px;top:149.75px;font-size:11.52px;color:#1e1f21;letter-spacing:0.22px;-webkit-text-stroke:0.17px #1e1f21;">Andrew Webster</span>
<svg class="b" style="left:1006px;top:149.8px;" width="10.4" height="10.4" viewBox="0 0 10.4 10.4" fill="none" stroke="#55565a" stroke-width="1" stroke-linecap="round" stroke-linejoin="round"><path d="M1.8 1.8L8.6 8.6M8.6 1.8L1.8 8.6" stroke-width="1.3"/></svg>
<span class="t " style="left:763.1px;top:183.55px;font-size:9.87px;color:#1e1f21;letter-spacing:0.25px;-webkit-text-stroke:0.1px #1e1f21;">Due date</span>
<div class="b" style="left:875.2px;top:176px;width:23.4px;height:23.4px;background:#fff;border-radius:12px;border:1px solid #8e8f90;box-sizing:border-box;"></div>
<svg class="b" style="left:881px;top:181.5px;" width="12" height="12" viewBox="0 0 12 12" fill="none" stroke="#55565a" stroke-width="0.9" stroke-linecap="round" stroke-linejoin="round"><rect x="1.2" y="1.8" width="9.6" height="9" rx="1.8"/><path d="M1.2 4.6H10.8M3.8 0.8V2.4M8.2 0.8V2.4"/></svg>
<span class="t " style="left:904.9px;top:182.85px;font-size:11.52px;color:#1e1f21;letter-spacing:0.02px;-webkit-text-stroke:0.17px #1e1f21;">10 Aug</span>
<svg class="b" style="left:954.6px;top:182.6px;" width="10.4" height="10.4" viewBox="0 0 10.4 10.4" fill="none" stroke="#55565a" stroke-width="1" stroke-linecap="round" stroke-linejoin="round"><path d="M1.8 1.8L8.6 8.6M8.6 1.8L1.8 8.6" stroke-width="1.3"/></svg>
<span class="t " style="left:763.1px;top:216.55px;font-size:9.87px;color:#1e1f21;letter-spacing:0.31px;-webkit-text-stroke:0.1px #1e1f21;">Projects</span>
<div class="b" style="left:868.6px;top:210.6px;width:232.6px;height:22.6px;background:#f9f8f8;border-radius:11.5px;"></div>
<div class="b" style="left:878px;top:217.4px;width:10px;height:9.8px;background:#c88fe9;border-radius:2.6px;"></div>
<span class="t " style="left:894.3px;top:216.95px;font-size:11.52px;color:#1e1f21;letter-spacing:0.28px;-webkit-text-stroke:0.1px #1e1f21;">Billboards - Tokyo</span>
<span class="t " style="left:996.9px;top:216.75px;font-size:11.52px;color:#6d6e6f;letter-spacing:0.03px;-webkit-text-stroke:0.17px #6d6e6f;">Launch Plan</span>
<svg class="b" style="left:1065px;top:217.5px;" width="10" height="10" viewBox="0 0 10 10" fill="none" stroke="#6d6e6f" stroke-width="1.25" stroke-linecap="round" stroke-linejoin="round"><path d="M2 3.6L4.8 6.2L7.6 3.6"/></svg>
<svg class="b" style="left:1083.6px;top:217.4px;" width="9.6" height="9.6" viewBox="0 0 9.6 9.6" fill="none" stroke="#6d6e6f" stroke-width="1.15" stroke-linecap="round" stroke-linejoin="round"><path d="M2.3 2.3L7 7M7 2.3L2.3 7"/></svg>
<span class="t " style="left:875.5px;top:244.95px;font-size:9.87px;color:#6d6e6f;letter-spacing:0.44px;-webkit-text-stroke:0.22px #6d6e6f;">Add to projects</span>
<span class="t " style="left:763.1px;top:275.35px;font-size:9.87px;color:#1e1f21;letter-spacing:0.24px;-webkit-text-stroke:0.1px #1e1f21;">Dependencies</span>
<svg class="b" style="left:874.6px;top:274.4px;" width="11" height="11" viewBox="0 0 11 11" fill="none" stroke="#c8405a" stroke-width="0.9" stroke-linecap="round" stroke-linejoin="round"><circle cx="5.4" cy="5.4" r="4.4"/><path d="M3.4 5.4H7.4"/></svg>
<span class="t " style="left:888.1px;top:274.75px;font-size:9.87px;color:#c8405a;letter-spacing:0.24px;-webkit-text-stroke:0.1px #c8405a;">Blocking</span>
<svg class="b" style="left:931.4px;top:275.4px;" width="10" height="10" viewBox="0 0 10 10" fill="none" stroke="#c8405a" stroke-width="1.25" stroke-linecap="round" stroke-linejoin="round"><path d="M2 3.5L4.8 6.1L7.6 3.5"/></svg>
<svg class="b" style="left:957px;top:274.4px;" width="11" height="11" viewBox="0 0 11 11" fill="none" stroke="#55565a" stroke-width="0.85" stroke-linecap="round" stroke-linejoin="round"><circle cx="5.5" cy="5.5" r="4.5"/><path d="M3.6 5.7L5 7L7.5 4.2"/></svg>
<span class="t " style="left:970.5px;top:274.75px;font-size:9.87px;color:#1e1f21;letter-spacing:0.17px;-webkit-text-stroke:0.1px #1e1f21;">Version 1 of Billboards</span>
<span class="t " style="left:1077.3px;top:274.85px;font-size:9.87px;color:#6d6e6f;-webkit-text-stroke:0.17px #6d6e6f;">·</span>
<span class="t " style="left:1083.1px;top:274.85px;font-size:9.87px;color:#6d6e6f;letter-spacing:0.25px;-webkit-text-stroke:0.17px #6d6e6f;">22 Aug</span>
<span class="t " style="left:763.1px;top:312.05px;font-size:9.87px;color:#1e1f21;letter-spacing:0.13px;-webkit-text-stroke:0.1px #1e1f21;">Fields</span>
<div class="b" style="left:868px;top:301px;width:411px;height:214.6px;background:#fff;border-radius:5px;border:1px solid #f1efee;box-sizing:border-box;"></div>
<div class="b" style="left:869px;top:330px;width:409px;height:1px;background:#f1efee;"></div>
<div class="b" style="left:869px;top:361px;width:409px;height:1px;background:#f1efee;"></div>
<div class="b" style="left:869px;top:392px;width:409px;height:1px;background:#f1efee;"></div>
<div class="b" style="left:869px;top:423px;width:409px;height:1px;background:#f1efee;"></div>
<div class="b" style="left:869px;top:453px;width:409px;height:1px;background:#f1efee;"></div>
<div class="b" style="left:869px;top:483px;width:409px;height:1px;background:#f1efee;"></div>
<div class="b" style="left:1032px;top:301.5px;width:1px;height:213.5px;background:#f1efee;"></div>
<svg class="b" style="left:877.6px;top:310.6px;" width="10.8" height="10.8" viewBox="0 0 11.6 11.6" fill="none" stroke="#6d6e6f" stroke-width="0.95" stroke-linecap="round" stroke-linejoin="round"><circle cx="5.8" cy="5.8" r="4.7"/><path d="M5.8 3.2V5.8H8"/></svg>
<span class="t " style="left:895.1px;top:311.2px;font-size:9.87px;color:#6d6e6f;letter-spacing:0.32px;-webkit-text-stroke:0.1px #6d6e6f;">Estimated time</span>
<svg class="b" style="left:877.6px;top:340.9px;" width="10.8" height="10.8" viewBox="0 0 11.6 11.6" fill="none" stroke="#6d6e6f" stroke-width="0.95" stroke-linecap="round" stroke-linejoin="round"><circle cx="5.8" cy="6.6" r="4.2"/><path d="M4.4 1.2H7.2M5.8 1.2V2.4M5.8 6.6L7.4 4.8M9.4 2.8L10 3.4"/></svg>
<span class="t " style="left:895.1px;top:341.5px;font-size:9.87px;color:#6d6e6f;letter-spacing:0.3px;-webkit-text-stroke:0.1px #6d6e6f;">Actual time</span>
<svg class="b" style="left:877.6px;top:371.5px;" width="10.8" height="10.8" viewBox="0 0 11.6 11.6" fill="none" stroke="#6d6e6f" stroke-width="0.95" stroke-linecap="round" stroke-linejoin="round"><path d="M4.2 1.4L3.2 10.2M8.4 1.4L7.4 10.2M1.6 4H10.4M1.2 7.6H10"/></svg>
<span class="t " style="left:895.1px;top:372.1px;font-size:9.87px;color:#6d6e6f;letter-spacing:0.25px;-webkit-text-stroke:0.1px #6d6e6f;">Actual hours</span>
<svg class="b" style="left:877.6px;top:402.2px;" width="10.8" height="10.8" viewBox="0 0 11.6 11.6" fill="none" stroke="#6d6e6f" stroke-width="0.95" stroke-linecap="round" stroke-linejoin="round"><rect x="1" y="2.4" width="9.8" height="7" rx="1.2"/><circle cx="5.9" cy="5.9" r="1.7"/><path d="M1 4.4C2 4.4 2.8 3.6 2.8 2.6M10.8 4.4C9.8 4.4 9 3.6 9 2.6"/></svg>
<span class="t " style="left:895.1px;top:402.8px;font-size:9.87px;color:#6d6e6f;letter-spacing:0.31px;-webkit-text-stroke:0.1px #6d6e6f;">Actual spend [GM Dept]</span>
<svg class="b" style="left:877.6px;top:433.1px;" width="10.8" height="10.8" viewBox="0 0 11.6 11.6" fill="none" stroke="#6d6e6f" stroke-width="0.95" stroke-linecap="round" stroke-linejoin="round"><circle cx="5.8" cy="5.8" r="4.7"/><path d="M3.8 5L5.8 7L7.8 5"/></svg>
<span class="t " style="left:895.1px;top:433.7px;font-size:9.87px;color:#6d6e6f;letter-spacing:0.21px;-webkit-text-stroke:0.1px #6d6e6f;">Region [GM Dept]</span>
<svg class="b" style="left:877.6px;top:463.5px;" width="10.8" height="10.8" viewBox="0 0 11.6 11.6" fill="none" stroke="#6d6e6f" stroke-width="0.95" stroke-linecap="round" stroke-linejoin="round"><path d="M1.8 10.2L5.8 1.6L9.8 10.2M3.2 7.2H8.4"/></svg>
<span class="t " style="left:895.1px;top:464.1px;font-size:9.87px;color:#6d6e6f;letter-spacing:0.39px;-webkit-text-stroke:0.1px #6d6e6f;">Expected effort</span>
<svg class="b" style="left:877.6px;top:494.1px;" width="10.8" height="10.8" viewBox="0 0 11.6 11.6" fill="none" stroke="#6d6e6f" stroke-width="0.95" stroke-linecap="round" stroke-linejoin="round"><path d="M1.4 1.6H5.6L10.4 6.4C10.8 6.8 10.8 7.4 10.4 7.8L7.6 10.6C7.2 11 6.6 11 6.2 10.6L1.4 5.8Z"/><circle cx="3.8" cy="4" r="0.7"/></svg>
<span class="t " style="left:895.1px;top:494.7px;font-size:9.87px;color:#6d6e6f;letter-spacing:0.05px;-webkit-text-stroke:0.1px #6d6e6f;">Tags</span>
<span class="t " style="left:1043.5px;top:311.2px;font-size:9.87px;color:#6d6e6f;letter-spacing:0.43px;-webkit-text-stroke:0.1px #6d6e6f;">Add estimated time</span>
<span class="t " style="left:1043.5px;top:341.5px;font-size:9.87px;color:#6d6e6f;letter-spacing:0.41px;-webkit-text-stroke:0.1px #6d6e6f;">Add actual time</span>
<svg class="b" style="left:1137.6px;top:339.3px;" width="14" height="14" viewBox="0 0 14 14" fill="none" stroke="#6d6e6f" stroke-width="0.85" stroke-linecap="round" stroke-linejoin="round"><circle cx="7" cy="7" r="6.1"/><path d="M5.6 4.6L9.4 7L5.6 9.4Z"/></svg>
<span class="t " style="left:1157.7px;top:341.5px;font-size:9.87px;color:#6d6e6f;letter-spacing:0.51px;-webkit-text-stroke:0.1px #6d6e6f;">Start timer</span>
<span class="t " style="left:1043.5px;top:372.27px;font-size:10.2px;color:#1e1f21;-webkit-text-stroke:0.05px #1e1f21;">4</span>
<span class="t " style="left:1043.5px;top:402.95px;font-size:9.87px;color:#6d6e6f;-webkit-text-stroke:0.17px #6d6e6f;transform:matrix(0.6,0,0.001,1,0,0);transform-origin:0px 50%;">—</span>
<span class="t " style="left:1043.5px;top:433.65px;font-size:9.87px;color:#a2a0a2;-webkit-text-stroke:0.17px #a2a0a2;transform:matrix(0.6,0,0.001,1,0,0);transform-origin:0px 50%;">—</span>
<span class="t " style="left:1043.5px;top:463.67px;font-size:10.2px;color:#1e1f21;-webkit-text-stroke:0.05px #1e1f21;">4</span>
<div class="b" style="left:1043px;top:491.2px;width:97.2px;height:16.8px;background:#f06a6a;border-radius:8.4px;"></div>
<span class="t " style="left:1053.1px;top:494.85px;font-size:9.87px;color:#5a1e24;letter-spacing:0.26px;-webkit-text-stroke:0.2px #5a1e24;">Team Meetings</span>
<svg class="b" style="left:1128.2px;top:496px;" width="8" height="8" viewBox="0 0 8 8" fill="none" stroke="#5a1e24" stroke-width="1.05" stroke-linecap="round" stroke-linejoin="round"><path d="M1.7 1.7L5.7 5.7M5.7 1.7L1.7 5.7"/></svg>
<div class="b" style="left:1143.6px;top:491.2px;width:43.6px;height:16.8px;background:#4ecbc4;border-radius:8.4px;"></div>
<span class="t " style="left:1153.1px;top:494.85px;font-size:9.87px;color:#0b4a48;-webkit-text-stroke:0.2px #0b4a48;">Ads</span>
<svg class="b" style="left:1175px;top:496px;" width="8" height="8" viewBox="0 0 8 8" fill="none" stroke="#0b4a48" stroke-width="1.05" stroke-linecap="round" stroke-linejoin="round"><path d="M1.7 1.7L5.7 5.7M5.7 1.7L1.7 5.7"/></svg>
<span class="t " style="left:763.1px;top:543.25px;font-size:9.87px;color:#1e1f21;letter-spacing:0.34px;-webkit-text-stroke:0.1px #1e1f21;">Description</span>
<span class="t " style="left:763.3px;top:568.95px;font-size:11.52px;color:#6d6e6f;letter-spacing:0.17px;-webkit-text-stroke:0.17px #6d6e6f;">What is this task about?</span>
<div class="b" style="left:744px;top:645px;width:556px;height:83px;background:#f9f8f8;"></div>
<svg class="b" style="left:763px;top:654.5px;" width="27" height="27" viewBox="0 0 27 27" fill="none" stroke="none" stroke-width="1" stroke-linecap="round" stroke-linejoin="round"><defs><clipPath id="c2"><circle cx="13.2" cy="13.4" r="12.9"/></clipPath></defs>
<g clip-path="url(#c2)" stroke="none"><rect width="27" height="27" fill="#ebe9e8"/>
<path d="M6.4 13C5.6 7.6 8.6 3.6 13.2 3.4C18.6 3.2 21.4 7.4 21.6 12.6C21.8 16.4 21.4 20 22.6 24.4L14 25L15.4 17Z" fill="#2a2321"/>
<ellipse cx="12.4" cy="12.2" rx="4.3" ry="5.4" fill="#cf987f"/>
<path d="M7.4 11C7.6 7.4 10.4 5.4 13.6 5.8C16.4 6.2 17.6 8.6 17.8 11.4C18.4 14 18.4 18 17.4 22L21 24L21.4 9L15.4 4L8.4 5.4Z" fill="#2a2321"/>
<path d="M10.6 16.6H14.6V20.6H10.6Z" fill="#c48b72"/>
<path d="M3 27C3.6 22.4 7 20 11 20C13 21 14.6 21 16 20.4C18 21.4 19 23.6 19.4 27Z" fill="#d98aa0"/>
<path d="M3.4 23.4C4.4 21.4 6.4 20.2 8.4 20L7.4 24.6Z" fill="#8c6fd0"/></g>
<circle cx="13.2" cy="13.4" r="12.9" stroke="#dedbda" stroke-width="0.6" fill="none"/></svg>
<div class="b" style="left:796.2px;top:655.4px;width:502.6px;height:25.8px;background:#fff;border-radius:4.5px;border:1px solid #e2dfde;box-sizing:border-box;"></div>
<span class="t " style="left:803.1px;top:663.05px;font-size:11.52px;color:#6d6e6f;letter-spacing:0.18px;-webkit-text-stroke:0.17px #6d6e6f;">Add a comment</span>
<span class="t " style="left:796.6px;top:702.85px;font-size:9.87px;color:#6d6e6f;letter-spacing:0.3px;-webkit-text-stroke:0.1px #6d6e6f;">Collaborators</span>
<div class="b" style="left:869.1px;top:697.6px;width:19.6px;height:19.6px;background:#f78a90;border-radius:10px;"></div>
<span class="t " style="left:872.5px;top:703.21px;font-size:9.2px;color:#2a1b1d;letter-spacing:-0.15px;-webkit-text-stroke:0.15px #2a1b1d;">NL</span>
<div class="b" style="left:892.1px;top:697.6px;width:19.6px;height:19.6px;background:#f8df72;border-radius:10px;"></div>
<span class="t " style="left:895.5px;top:703.21px;font-size:9.2px;color:#2a1b1d;letter-spacing:0.25px;-webkit-text-stroke:0.15px #2a1b1d;">TB</span>
<div class="b" style="left:915px;top:697.6px;width:19.6px;height:19.6px;background:#c88fe9;border-radius:10px;"></div>
<span class="t " style="left:917.9px;top:702.83px;font-size:9.3px;color:#2a1b1d;-webkit-text-stroke:0.12px #2a1b1d;transform:matrix(0.9,0,0.001,1,0,0);transform-origin:0px 50%;">AW</span>
<svg class="b" style="left:944.2px;top:701.8px;" width="11" height="11" viewBox="0 0 11 11" fill="none" stroke="#55565a" stroke-width="1.4" stroke-linecap="round" stroke-linejoin="round"><path d="M5.5 1.8V9.2M1.8 5.5H9.2"/></svg>
<svg class="b" style="left:1222.6px;top:700.5px;" width="14" height="15" viewBox="0 0 14 15" fill="none" stroke="#6d6e6f" stroke-width="0.95" stroke-linecap="round" stroke-linejoin="round"><path d="M2.6 10.8C3.6 9.8 3.8 8.6 3.8 6.6C3.8 4 5.2 2.4 7 2.4C8.8 2.4 10.2 4 10.2 6.6C10.2 8.6 10.4 9.8 11.4 10.8Z"/><path d="M5.8 12.4C6.4 13 7.6 13 8.2 12.4"/></svg>
<span class="t " style="left:1239.9px;top:702.05px;font-size:11.52px;color:#6d6e6f;letter-spacing:0.29px;-webkit-text-stroke:0.3px #6d6e6f;">Join task</span>
<div class="b" style="left:1298.7px;top:0px;width:1.3px;height:40px;background:#fff;"></div>
</div></body></html>
